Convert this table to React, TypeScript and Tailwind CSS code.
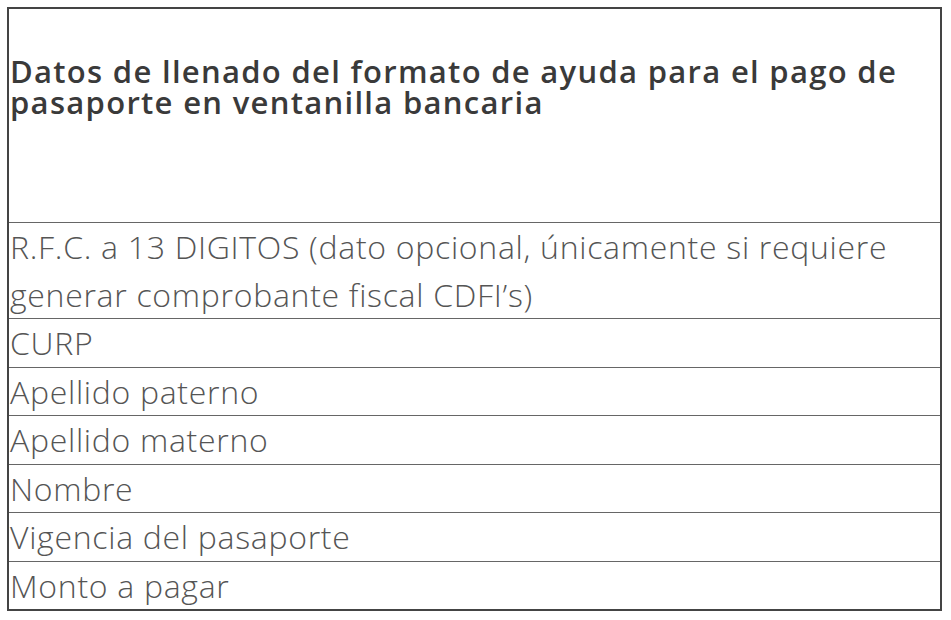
import React from "react";

const rows = [
  "R.F.C. a 13 DIGITOS (dato opcional, únicamente si requiere generar comprobante fiscal CDFI’s)",
  "CURP",
  "Apellido paterno",
  "Apellido materno",
  "Nombre",
  "Vigencia del pasaporte",
  "Monto a pagar",
];

export default function App() {
  return (
    <div className="w-[951px] h-[620px] bg-white pt-[7px] pl-[7px]" style={{ fontFamily: '"Open Sans", sans-serif' }}>
      <div className="w-[935px] border-2 border-[#444] flex flex-col">
        <div className="h-[214px] pt-[47px] pl-[1px] pr-8 text-[31px] leading-[31px] tracking-[1.3px] font-semibold text-[#3a3a3a] border-b border-[#666]">
          Datos de llenado del formato de ayuda para el pago de pasaporte en ventanilla bancaria
        </div>
        {rows.map((r, i) => (
          <div
            key={i}
            className={`pl-[1px] pr-12 text-[32px] leading-[47.5px] tracking-[0.7px] font-light text-[#555] ${i < rows.length - 1 ? "border-b border-[#666]" : ""}`}
          >
            {r}
          </div>
        ))}
      </div>
    </div>
  );
}
